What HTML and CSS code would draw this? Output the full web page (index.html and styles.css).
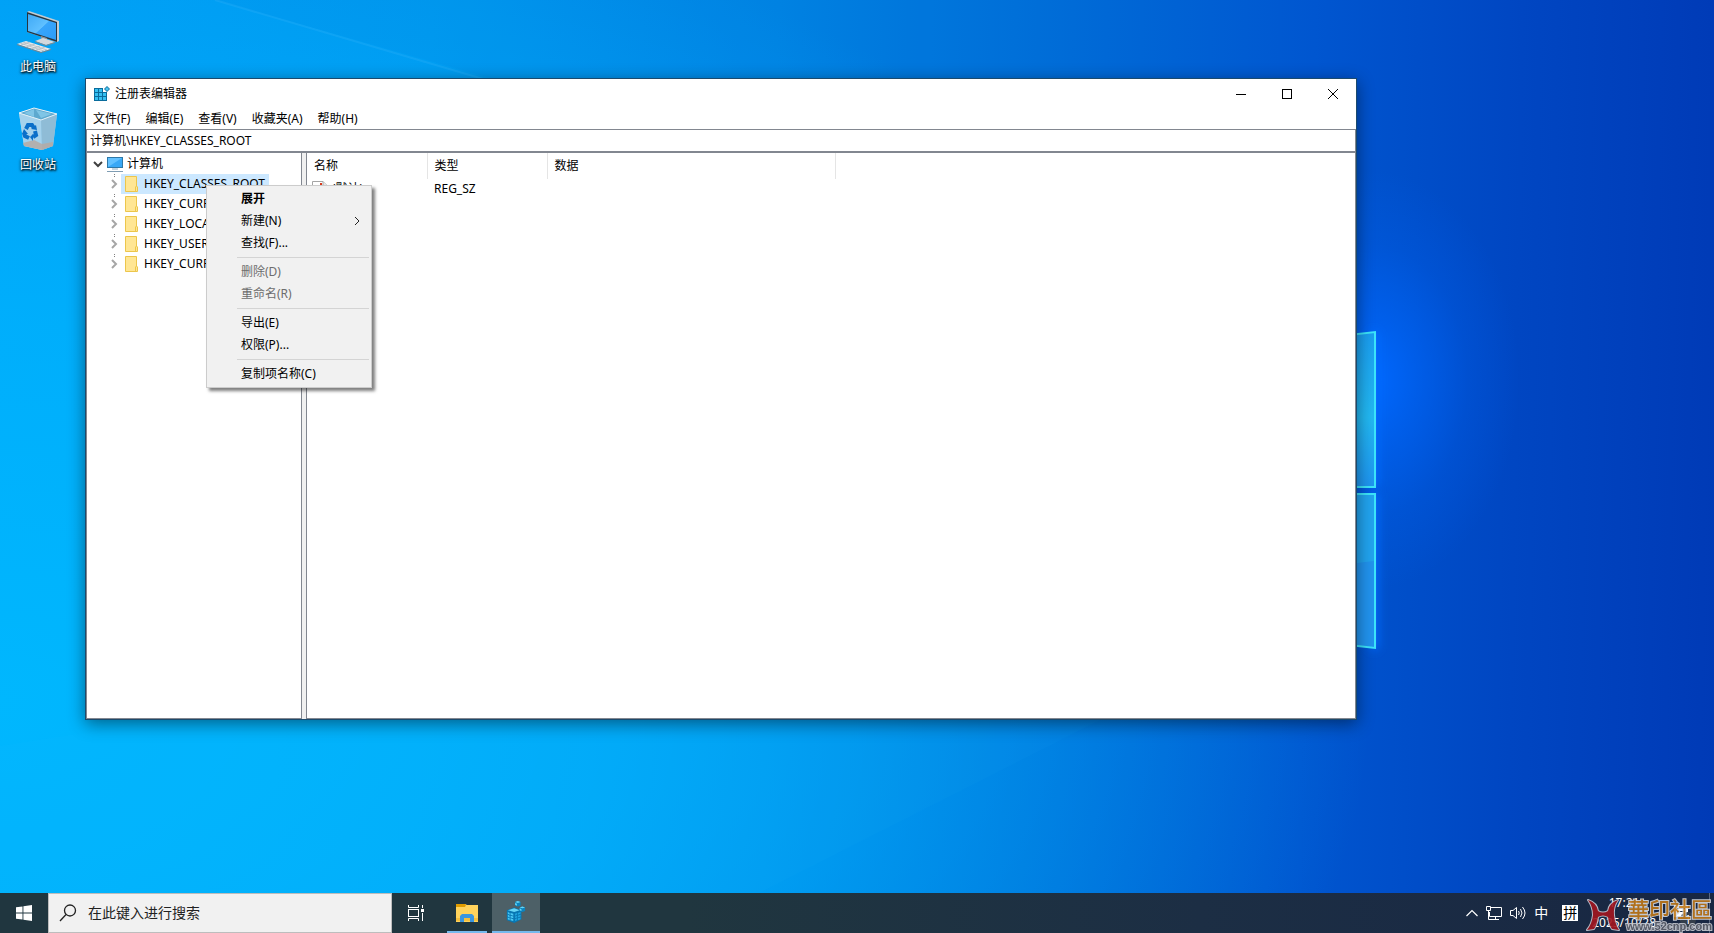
FILE: index.html
```html
<!DOCTYPE html>
<html lang="zh-CN">
<head>
    <meta charset="UTF-8">
    <meta name="viewport" content="width=device-width, initial-scale=1.0">
    <title>注册表编辑器</title>
    <link rel="stylesheet" href="styles.css">
</head>
<body>
    <!-- Wallpaper -->
    <svg class="wallpaper" viewBox="0 0 1714 933" preserveAspectRatio="none" aria-hidden="true">
        <defs>
            <linearGradient id="paneTop" x1="0" y1="0" x2="0" y2="1">
                <stop offset="0" stop-color="#1a9df0"/>
                <stop offset="0.55" stop-color="#22b8f2"/>
                <stop offset="1" stop-color="#1e94f0"/>
            </linearGradient>
            <filter id="soft" x="1300" y="280" width="150" height="420" filterUnits="userSpaceOnUse">
                <feGaussianBlur stdDeviation="5"/>
            </filter>
        </defs>
        <path d="M215 0 L490 78 L1000 200 L1000 0 Z" fill="#0064c8" opacity="0.06"/>
        <path d="M215 0 L500 84" stroke="#5cc4ff" stroke-width="2" opacity="0.15"/>
        <path d="M0 746 L260 705 L1130 705 L680 933 L0 933 Z" fill="#30c4ff" opacity="0.04"/>
        <path d="M1374 332 V486 M1374 494 V649" stroke="#0a6cff" stroke-width="8" filter="url(#soft)"/>
        <path d="M1340 336 L1375 332 V487 H1340 Z" fill="url(#paneTop)" stroke="#3ce4fa" stroke-width="2"/>
        <path d="M1340 494 H1375 V648 L1340 644 Z" fill="#2193ee" stroke="#3ce4fa" stroke-width="2"/>
        <path d="M1340 495 H1374 V561 L1340 565 Z" fill="#22aaf0" opacity="0.7"/>
    </svg>

    <main class="desktop">
        <div class="shortcuts">
            <a class="shortcut" href="#computer">
                <svg width="48" height="48" viewBox="0 0 48 48" aria-hidden="true">
                    <defs>
                        <linearGradient id="screen" x1="0" y1="0" x2="1" y2="1">
                            <stop offset="0" stop-color="#3fa9f5"/>
                            <stop offset="0.5" stop-color="#5fc0ff"/>
                            <stop offset="0.52" stop-color="#37a5fb"/>
                            <stop offset="1" stop-color="#2b9cf8"/>
                        </linearGradient>
                    </defs>
                    <path d="M13 4 L15 3 L45 13 V33 L43 34 L13 24 Z" fill="#c3ccd2"/>
                    <path d="M13 4 L43 14 V34 L13 24 Z" fill="#26343f"/>
                    <path d="M14 6 L42 15 V32 L14 23 Z" fill="url(#screen)"/>
                    <path d="M27 28 L33 30 V34 L27 32 Z" fill="#8b969e"/>
                    <path d="M21 33 L29 30 L41 34 L32 37 Z" fill="#d3d8dc"/>
                    <path d="M21 33 L32 37 L41 34 V35 L32 38 L21 34 Z" fill="#7f8a91"/>
                    <path d="M3 36 L12 33 L37 41 L27 44 Z" fill="#e6e9eb"/>
                    <path d="M3 36 L27 44 L37 41 V42 L27 45 L3 37 Z" fill="#79848c"/>
                    <path d="M7 37 L16 34 M12 39 L21 36 M17 41 L26 38 M22 42 L31 39 M9 34 L33 42 M6 35 L30 43" stroke="#aeb6bc" stroke-width="0.700"/>
                </svg>
                <span>此电脑</span>
            </a>
            <a class="shortcut" href="#recycle">
                <svg width="48" height="48" viewBox="0 0 48 48" aria-hidden="true">
                    <path d="M5 7 L20 2 L43 8 L39 40 L28 44 L10 40 Z" fill="#a9d8f2" opacity="0.9"/>
                    <path d="M5 7 L20 2 L43 8 L27 14 Z" fill="#5ea9cf"/>
                    <path d="M10 7 L20 3 V11 Z M22 4 L38 8 L27 12 Z" fill="#7fc5e6"/>
                    <path d="M5 7 L27 14 L28 44 L10 40 Z" fill="#a5d2ec"/>
                    <path d="M27 14 L43 8 L39 40 L28 44 Z" fill="#8fbcd6"/>
                    <path d="M9 37 L20 34 L28 38 L39 36 V40 L28 44 L10 40 Z" fill="#b5aaa5" opacity="0.85"/>
                    <path d="M5 7 L20 2 L43 8 L27 14 Z" fill="none" stroke="#e3f1f8" stroke-width="1"/>
                    <path d="M12 23 L14 19 L18 19 L20 22 M21 25 L22 29 L19 31 M15 32 L11 30 L10 27" fill="none" stroke="#0a6fc9" stroke-width="4"/>
                    <path d="M17 23 L23 24 L22 19 Z M19 28 L16 31 L19 35 Z M8 28 L10 23 L14 28 Z" fill="#0a6fc9"/>
                </svg>
                <span>回收站</span>
            </a>
        </div>

        <!-- Registry editor window -->
        <section class="window">
            <header class="titlebar">
                <svg width="16" height="16" viewBox="0 0 16 16" aria-hidden="true">
                    <path d="M0 2 H9 V6 H13 V15 H0 Z" fill="#0a6c9c"/>
                    <path d="M1 3 h3 v3 h-3z M5 3 h3 v3 h-3z M1 7 h3 v3 h-3z M5 7 h3 v3 h-3z M9 7 h3 v3 h-3z M1 11 h3 v3 h-3z M5 11 h3 v3 h-3z M9 11 h3 v3 h-3z" fill="#35c0f2"/>
                    <path d="M13 0 L16 3 L13 6 L10 3 Z" fill="#0a6c9c"/>
                    <path d="M13 1 L15 3 L13 5 L11 3 Z" fill="#4cc4ee"/>
                </svg>
                <h1>注册表编辑器</h1>
                <div class="window-buttons">
                    <button aria-label="最小化"><svg width="10" height="10" viewBox="0 0 10 10"><path d="M0 5.500 H10" stroke="#000"/></svg></button>
                    <button aria-label="最大化"><svg width="10" height="10" viewBox="0 0 10 10"><rect x="0.5" y="0.5" width="9" height="9" fill="none" stroke="#000"/></svg></button>
                    <button aria-label="关闭"><svg width="10" height="10" viewBox="0 0 10 10"><path d="M0 0 L10 10 M10 0 L0 10" stroke="#000"/></svg></button>
                </div>
            </header>
            <nav class="menubar">
                <button>文件(F)</button>
                <button>编辑(E)</button>
                <button>查看(V)</button>
                <button>收藏夹(A)</button>
                <button>帮助(H)</button>
            </nav>
            <input class="address" type="text" aria-label="地址" value="计算机\HKEY_CLASSES_ROOT">
            <div class="panes">
                <div class="tree">
                    <button class="root">
                        <svg width="10" height="8" viewBox="0 0 10 8"><path d="M1 2 L5 6 L9 2" fill="none" stroke="#404040" stroke-width="2"/></svg>
                        <svg width="16" height="16" viewBox="0 0 16 16">
                            <rect x="0" y="1" width="16" height="11" fill="#2d78a8"/>
                            <rect x="1" y="2" width="14" height="9" fill="#38a8f6"/>
                            <path d="M1 11 V2 H15 Z" fill="#62c1ff"/>
                            <path d="M5 13 H11" stroke="#8eaabd"/>
                            <path d="M0 15.500 H16" stroke="#7f9db3"/>
                        </svg>
                        <span>计算机</span>
                    </button>
                    <ul id="keys"></ul>
                </div>
                <div class="splitter"></div>
                <div class="values">
                    <table>
                        <colgroup>
                            <col class="col-name">
                            <col class="col-type">
                            <col class="col-data">
                            <col>
                        </colgroup>
                        <thead>
                            <tr><th>名称</th><th>类型</th><th>数据</th><td></td></tr>
                        </thead>
                        <tbody>
                            <tr>
                                <td>
                                    <div class="value-name">
                                        <svg width="16" height="16" viewBox="0 0 16 16">
                                            <path d="M0.500 0.500 H11 L15 4.500 V15.500 H0.500 Z" fill="#fff" stroke="#a5a5a5"/>
                                            <path d="M11 0.500 V4.500 H15" fill="#e8e8e8" stroke="#a5a5a5"/>
                                            <path d="M9 2 V12 M9 7 H6 V12 H9" fill="none" stroke="#d83b1e" stroke-width="2"/>
                                        </svg>
                                        <span>(默认)</span>
                                    </div>
                                </td>
                                <td>REG_SZ</td>
                                <td></td>
                                <td></td>
                            </tr>
                        </tbody>
                    </table>
                </div>
            </div>
        </section>

        <!-- Context menu of the selected key -->
        <div class="context-menu" role="menu">
            <button class="default" role="menuitem">展开</button>
            <button role="menuitem">新建(N)
                <svg width="6" height="8" viewBox="0 0 6 8"><path d="M1 0 L5 4 L1 8" fill="none" stroke="#222"/></svg>
            </button>
            <button role="menuitem">查找(F)...</button>
            <hr>
            <button role="menuitem" disabled>删除(D)</button>
            <button role="menuitem" disabled>重命名(R)</button>
            <hr>
            <button role="menuitem">导出(E)</button>
            <button role="menuitem">权限(P)...</button>
            <hr>
            <button role="menuitem">复制项名称(C)</button>
        </div>
    </main>

    <footer class="taskbar">
        <button class="task" aria-label="开始">
            <svg width="16" height="16" viewBox="0 0 16 16"><path d="M0 2.300 L6.500 1.400 V7.500 H0 Z M7.400 1.200 L16 0 V7.500 H7.400 Z M0 8.500 H6.500 V14.600 L0 13.700 Z M7.400 8.500 H16 V16 L7.400 14.800 Z" fill="#fff"/></svg>
        </button>
        <label class="search">
            <svg width="18" height="18" viewBox="0 0 18 18"><circle cx="11" cy="6.500" r="5.500" fill="none" stroke="#222" stroke-width="1.300"/><path d="M7 10.500 L1 17" stroke="#222" stroke-width="1.300"/></svg>
            <input type="text" placeholder="在此键入进行搜索" aria-label="搜索">
        </label>
        <button class="task" aria-label="任务视图">
            <svg width="16" height="16" viewBox="0 0 16 16" fill="none" stroke="#fff">
                <path d="M0.500 0 V2.500 H10.500 V0 M0.500 16 V13.500 H10.500 V16"/>
                <rect x="0.5" y="4.5" width="10" height="7"/>
                <path d="M14.500 0 V3 M14.500 8 V16"/>
                <rect x="13" y="4" width="3" height="3" fill="#fff" stroke="none"/>
            </svg>
        </button>
        <button class="task running" aria-label="文件资源管理器">
            <svg width="22" height="18" viewBox="0 0 22 18">
                <path d="M0 0 H9 L11 1 H22 V18 H0 Z" fill="#ffd35c"/>
                <path d="M0 0 H9 L10 1 L9 3 H0 Z" fill="#e09c00"/>
                <path d="M0 14 H22 V17 H0 Z" fill="#f5bf3e"/>
                <path d="M4 18 V12 L6 10 H16 L18 12 V18 H14 V14 H8 V18 Z" fill="#3a96e0"/>
            </svg>
        </button>
        <button class="task running active" aria-label="注册表编辑器">
            <svg width="20" height="22" viewBox="0 0 22 24">
                <path d="M1 10 L9 7 L17 10 V20 L9 24 L1 21 Z" fill="#0877b3"/>
                <path d="M2 10 L9 8 L15 10 L9 12 Z" fill="#67d5f5"/>
                <path d="M2 12 l2 1 v2 l-2 -1z M5 13 l3 1 v2 l-3 -1z M2 15 l2 1 v2 l-2 -1z M5 16 l3 1 v2 l-3 -1z M2 18 l2 1 v2 l-2 -1z M5 19 l3 1 v2 l-3 -1z" fill="#4cc9f4"/>
                <path d="M10 14 l2 -1 v2 l-2 1z M13 13 l3 -1 v2 l-3 1z M10 17 l2 -1 v2 l-2 1z M13 16 l3 -1 v2 l-3 1z M10 20 l2 -1 v2 l-2 1z M13 19 l3 -1 v2 l-3 1z" fill="#21a5e0"/>
                <path d="M13 0 l3 1 v4 l-3 1 l-3 -1 v-4z" fill="#0c83bd"/>
                <path d="M13 0 l3 1 l-3 1 l-3 -1z M10 2 l2 1 v2 l-2 -1z" fill="#67d5f5"/>
                <path d="M18 6 l3 1 v4 l-3 1 l-3 -1 v-4z" fill="#0c83bd"/>
                <path d="M18 6 l3 1 l-3 1 l-3 -1z M15 8 l2 1 v2 l-2 -1z" fill="#67d5f5"/>
            </svg>
        </button>

        <div class="tray">
            <button aria-label="显示隐藏的图标"><svg width="12" height="8" viewBox="0 0 12 8"><path d="M0.500 7 L6 1.500 L11.500 7" fill="none" stroke="#fff" stroke-width="1.200"/></svg></button>
            <button aria-label="网络">
                <svg width="16" height="14" viewBox="0 0 16 14" fill="none" stroke="#fff">
                    <path d="M5 1.500 H15.500 V10.500 H3.500 V6 M9.500 10.500 V13 M6 13.500 H13"/>
                    <path d="M0.500 0.500 H4.500 V4.500 H0.500 Z M2.500 4.500 V13.500 H6"/>
                </svg>
            </button>
            <button aria-label="音量">
                <svg width="16" height="14" viewBox="0 0 16 14" fill="none" stroke="#fff">
                    <path d="M0.500 4.500 H3 L6.500 1.500 V12.500 L3 9.500 H0.500 Z M8.500 5 Q10 7 8.500 9 M10.500 3 Q13.500 7 10.500 11 M12.500 1 Q17.500 7 12.500 13"/>
                </svg>
            </button>
            <button class="lang">中</button>
            <button class="ime"><span>拼</span></button>
            <time class="clock"><span>17:21</span><span>2025/10/28</span></time>
            <button class="notice" aria-label="通知">
                <svg width="18" height="18" viewBox="0 0 18 18"><path d="M2 1 H16 V13 H12 L8 17 V13 H2 Z" fill="#fff"/><path d="M5 4.500 H13 M5 7.500 H13" stroke="#1c2a40"/></svg>
                <b>1</b>
            </button>
        </div>
    </footer>

    <div class="watermark">
        <svg width="34" height="34" viewBox="0 0 34 34" aria-hidden="true">
            <path d="M2 2 Q11 5 12 13 Q17 16 22 13 Q23 5 32 2 Q27 9 28 17 Q29 26 33 32 L26 31 Q23 27 22 19 Q17 16 12 19 Q11 27 8 31 L1 32 Q6 26 7 17 Q7 9 2 2 Z" fill="#a3161f" stroke="#c7cbd6" stroke-width="2" paint-order="stroke" stroke-linejoin="round"/>
        </svg>
        <div class="watermark-text">
            <strong>華印社區</strong>
            <span>www.52cnp.com</span>
        </div>
    </div>

    <script>
        const keys = [
            "HKEY_CLASSES_ROOT",
            "HKEY_CURRENT_USER",
            "HKEY_LOCAL_MACHINE",
            "HKEY_USERS",
            "HKEY_CURRENT_CONFIG",
        ];

        // Fill the tree with the root keys
        const list = document.getElementById("keys");
        keys.forEach((key, i) => {
            list.innerHTML += `
                <li>
                    <svg class="expander" width="8" height="20" viewBox="0 0 8 20">
                        <path d="M4.500 0 V4" stroke="#808080" stroke-dasharray="1 1"/>
                        <path d="M2 6 L6 10 L2 14" fill="none" stroke="#a6a6a6" stroke-width="2"/>
                    </svg>
                    <button class="${i === 0 ? "selected" : ""}">
                        <svg width="13" height="16" viewBox="0 0 13 16">
                            <path d="M0.500 0.500 H11.500 V10 L12.500 11 V15.500 H0.500 Z" fill="#ffe694" stroke="#ecc64c"/>
                            <path d="M10.500 15 V11 L11.500 10" fill="none" stroke="#ecc64c"/>
                        </svg>
                        <span>${key}</span>
                    </button>
                </li>`;
        });
    </script>
</body>
</html>
```
FILE: styles.css
```css
* {
    box-sizing: border-box;
}
body {
    margin: 0;
    height: 100vh;
    display: flex;
    flex-direction: column;
    overflow: hidden;
    position: relative;
    font-family: "Noto Sans", "Noto Sans CJK SC", sans-serif;
    font-size: 12px;
    line-height: 20px;
    color: #000;
    background:
        radial-gradient(ellipse 150px 210px at 1370px 380px, #0068ff 0%, rgba(0, 104, 255, 0.6) 30%, rgba(0, 104, 255, 0.2) 65%, rgba(0, 104, 255, 0) 100%),
        radial-gradient(ellipse 80% 90% at 0% 75%, rgba(0, 186, 255, 0.9) 0%, rgba(0, 182, 255, 0.7) 45%, rgba(0, 160, 245, 0) 100%),
        linear-gradient(91deg, #009cf4 0%, #0096ee 25%, #0084e4 45%, #006ed8 60%, #0056d0 76%, #0046c2 88%, #003ab6 100%);
}
button, input {
    font: inherit;
    color: inherit;
    border: none;
    background: none;
    padding: 0;
    margin: 0;
    outline: none;
}
svg {
    display: block;
    flex: none;
}
.wallpaper {
    position: absolute;
    inset: 0;
    width: 100%;
    height: 100%;
}
.desktop {
    flex: 1;
    position: relative;
}

/* desktop shortcuts */
.shortcuts {
    display: flex;
    flex-direction: column;
    gap: 29px;
    width: 76px;
    padding-top: 8px;
}
.shortcut {
    display: flex;
    flex-direction: column;
    align-items: center;
    gap: 1px;
    color: #fff;
    text-decoration: none;
    text-shadow: 1px 1px 2px #000, 0 1px 3px #000;
}

/* window */
.window {
    position: absolute;
    top: 78px;
    left: 85px;
    right: 357px;
    bottom: 173px;
    display: flex;
    flex-direction: column;
    background: #fff;
    border: 1px solid #1c4a6c;
    box-shadow: 0 4px 16px rgba(0, 0, 0, 0.45);
}
.titlebar {
    display: flex;
    align-items: center;
    gap: 5px;
    height: 30px;
    padding-left: 8px;
}
.titlebar h1 {
    margin: 0;
    font-size: 12px;
    font-weight: normal;
}
.window-buttons {
    display: flex;
    margin-left: auto;
}
.window-buttons button {
    display: flex;
    align-items: center;
    justify-content: center;
    width: 46px;
    height: 28px;
}
.menubar {
    display: flex;
    gap: 15px;
    height: 20px;
    padding-left: 7px;
}
.address {
    height: 24px;
    padding: 0 3px 1px;
    border: 1px solid #828790;
    border-bottom-width: 2px;
}
.panes {
    flex: 1;
    display: flex;
    min-height: 0;
}
.tree {
    width: 216px;
    padding-top: 1px;
    border: 1px solid #828790;
    border-top: none;
}
.tree .root {
    display: flex;
    align-items: center;
    gap: 4px;
    height: 20px;
    padding-left: 6px;
}
.tree ul {
    list-style: none;
    margin: 0;
    padding: 0 0 0 23px;
}
.tree li {
    display: flex;
    gap: 3px;
    height: 20px;
}
.tree li button {
    display: flex;
    align-items: center;
    gap: 6px;
    padding: 0 4px;
}
.tree li .selected {
    background: #cce8ff;
}
.splitter {
    width: 4px;
    background: #f0f0f0;
}
.values {
    flex: 1;
    border: 1px solid #828790;
    border-top: none;
}
.values table {
    width: 100%;
    table-layout: fixed;
    border-collapse: collapse;
}
.col-name, .col-type {
    width: 120px;
}
.col-data {
    width: 288px;
}
.values th, .values td {
    padding: 0 0 0 7px;
    text-align: left;
    font-weight: normal;
}
.values th {
    height: 26px;
    border-right: 1px solid #e5e5e5;
}
.value-name {
    display: flex;
    align-items: center;
    gap: 4px;
    margin-left: -2px;
}

/* context menu */
.context-menu {
    position: absolute;
    top: 185px;
    left: 206px;
    width: 166px;
    padding: 2px;
    background: #f1f1f1;
    border: 1px solid #ccc;
    box-shadow: 3px 3px 3px rgba(0, 0, 0, 0.5);
}
.context-menu button {
    display: flex;
    align-items: center;
    justify-content: space-between;
    width: 100%;
    height: 22px;
    padding: 0 9px 0 32px;
}
.context-menu button:disabled {
    color: #6d6d6d;
}
.context-menu .default {
    font-weight: bold;
}
.context-menu hr {
    height: 1px;
    margin: 3px 0 3px 28px;
    border: none;
    background: #d4d4d4;
}

/* taskbar */
.taskbar {
    position: relative;
    display: flex;
    height: 40px;
    color: #fff;
    background: linear-gradient(90deg, #20363f 0%, #20363f 40%, #1c2e44 70%, #182743 100%);
}
.task {
    display: flex;
    align-items: center;
    justify-content: center;
    width: 48px;
    height: 40px;
}
.search {
    display: flex;
    align-items: center;
    gap: 11px;
    width: 344px;
    padding-left: 10px;
    background: #f1f1f1;
    border: 1px solid #bdbdbd;
    color: #222;
}
.search input {
    flex: 1;
    font-size: 14px;
}
.search input::placeholder {
    color: #222;
}
.running {
    margin-left: 3px;
    background: linear-gradient(#76b9ed, #76b9ed) center bottom / 40px 2px no-repeat;
}
.active {
    margin-left: 1px;
    background: #4d6067;
    border-bottom: 2px solid #76b9ed;
}
.tray {
    display: flex;
    align-items: center;
    margin-left: auto;
    padding-right: 5px;
    gap: 8px;
    border-right: 1px solid #5a6780;
    margin-right: 4px;
}
.tray .lang {
    font-size: 14px;
}
.ime {
    padding: 0 6px;
}
.ime span {
    display: block;
    width: 16px;
    height: 16px;
    line-height: 16px;
    font-size: 14px;
    color: #000;
    background: #fff;
}
.clock {
    display: flex;
    flex-direction: column;
    align-items: center;
}
.notice {
    position: relative;
    width: 40px;
    padding-left: 8px;
}
.notice b {
    position: absolute;
    left: 16px;
    top: 8px;
    width: 16px;
    height: 16px;
    border-radius: 8px;
    line-height: 16px;
    font-weight: normal;
    background: #333d4a;
}

/* corner watermark */
.watermark {
    position: absolute;
    right: 2px;
    bottom: 0;
    display: flex;
    align-items: center;
    gap: 6px;
    opacity: 0.9;
    pointer-events: none;
}
.watermark-text {
    display: flex;
    flex-direction: column;
    align-items: flex-end;
}
.watermark-text strong {
    font: 500 21px/22px "Noto Sans CJK TC", sans-serif;
    color: #c07818;
    -webkit-text-stroke: 2px #d5d8df;
    paint-order: stroke fill;
}
.watermark-text span {
    font: bold 11px/14px "Liberation Sans", sans-serif;
    color: #5c5f6a;
    -webkit-text-stroke: 2px #c5c8cf;
    paint-order: stroke fill;
}
```
